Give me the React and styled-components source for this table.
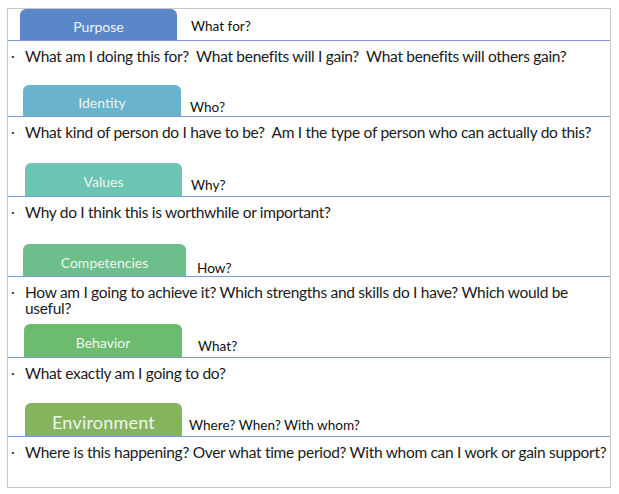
import React from 'react'
import styled, { createGlobalStyle } from 'styled-components'

const GlobalStyle = createGlobalStyle`
  body {
    margin: 0;
    background: #ffffff;
    font-family: Lato, "Open Sans", sans-serif;
    color: #1c1c1c;
  }
`

const Frame = styled.div`
  margin: 8px 0 0 7px;
  width: 602px;
  border: 1px solid #c9c9c9;
  display: flex;
  flex-direction: column;
`

const Header = styled.div`
  display: flex;
  align-items: flex-end;
  flex: none;
  height: ${p => p.$height}px;
  border-bottom: 1px solid #7d9dcb;
  padding-left: ${p => p.$tabLeft}px;
`

const Tab = styled.div`
  display: flex;
  align-items: center;
  justify-content: center;
  box-sizing: border-box;
  padding-top: 4px;
  width: ${p => p.$width}px;
  height: 100%;
  background: ${p => p.$color};
  border-radius: 6px 6px 0 0;
  color: #eef6ee;
  font-size: ${p => (p.$big ? 18 : 14)}px;
  letter-spacing: ${p => (p.$big ? 0.2 : 0)}px;
`

const Label = styled.div`
  margin-left: ${p => p.$gap}px;
  padding-bottom: ${p => p.$lift}px;
  font-size: 13.6px;
  line-height: 16px;
  color: #111;
`

const Body = styled.div`
  display: flex;
  flex: none;
  height: ${p => p.$height}px;
  padding-top: 7px;
  box-sizing: border-box;
`

const Bullet = styled.span`
  width: 14px;
  flex: none;
  padding-left: 3px;
  font-size: 14px;
  line-height: 16px;
`

const Question = styled.p`
  margin: 0;
  font-size: 15.5px;
  line-height: 16px;
  letter-spacing: -0.3px;
  white-space: pre;
  color: #1a1a1a;
`

const sections = [
  {
    name: 'Purpose',
    color: '#5b87c9',
    tabLeft: 12,
    tabWidth: 157,
    gap: 14,
    lift: 6,
    headerH: 31,
    label: 'What for?',
    question: 'What am I doing this for?  What benefits will I gain?  What benefits will others gain?',
    bodyH: 44,
  },
  {
    name: 'Identity',
    color: '#69b3cc',
    tabLeft: 15,
    tabWidth: 158,
    gap: 9,
    lift: 1,
    headerH: 31,
    label: 'Who?',
    question: 'What kind of person do I have to be?  Am I the type of person who can actually do this?',
    bodyH: 46,
  },
  {
    name: 'Values',
    color: '#6cc4b4',
    tabLeft: 17,
    tabWidth: 157,
    gap: 9,
    lift: 3,
    headerH: 33,
    label: 'Why?',
    question: 'Why do I think this is worthwhile or important?',
    bodyH: 47,
  },
  {
    name: 'Competencies',
    color: '#6cbf8b',
    tabLeft: 15,
    tabWidth: 163,
    gap: 11,
    lift: 0,
    headerH: 32,
    label: 'How?',
    question: 'How am I going to achieve it? Which strengths and skills do I have? Which would be\nuseful?',
    bodyH: 47,
  },
  {
    name: 'Behavior',
    color: '#6dbb6f',
    tabLeft: 16,
    tabWidth: 158,
    gap: 16,
    lift: 3,
    headerH: 33,
    label: 'What?',
    question: 'What exactly am I going to do?',
    bodyH: 45,
  },
  {
    name: 'Environment',
    color: '#86b35d',
    tabLeft: 17,
    tabWidth: 157,
    gap: 7,
    lift: 3,
    headerH: 33,
    big: true,
    label: 'Where? When? With whom?',
    question: 'Where is this happening? Over what time period? With whom can I work or gain support?',
    bodyH: 50,
  },
]

const Section = ({ s }) => (
  <>
    <Header $height={s.headerH} $tabLeft={s.tabLeft}>
      <Tab $color={s.color} $width={s.tabWidth} $big={s.big}>
        {s.name}
      </Tab>
      <Label $gap={s.gap} $lift={s.lift}>
        {s.label}
      </Label>
    </Header>
    <Body $height={s.bodyH}>
      <Bullet>·</Bullet>
      <Question>{s.question}</Question>
    </Body>
  </>
)

export default function App() {
  return (
    <>
      <GlobalStyle />
      <Frame>
        {sections.map(s => (
          <Section key={s.name} s={s} />
        ))}
      </Frame>
    </>
  )
}
